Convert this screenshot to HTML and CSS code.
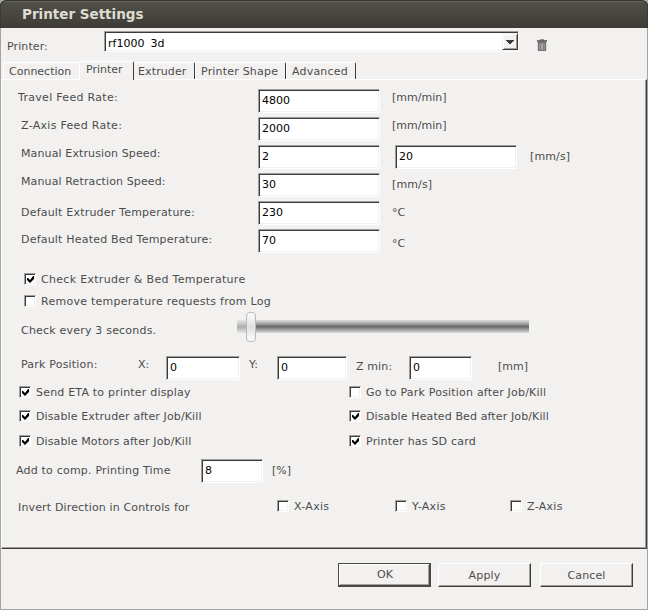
FILE: index.html
```html
<!DOCTYPE html>
<html lang="en">
<head>
<meta charset="utf-8">
<title>Printer Settings</title>
<link rel="stylesheet" href="styles.css">
</head>
<body>
<main class="window">
  <header class="titlebar">Printer Settings</header>
  <div class="client">
    <div class="printer-row">
      <span class="printer-label">Printer:</span>
      <div class="combo"><span>rf1000 3d</span><span class="arrow"><svg width="8" height="4" viewBox="0 0 8 4" shape-rendering="crispEdges"><path d="M0 0h8v1H0zM1 1h6v1H1zM2 2h4v1H2zM3 3h2v1H3z" fill="#3c3b37"/></svg></span></div>
      <svg class="trash" width="10" height="12" viewBox="0 0 10 12"><path d="M3 0h4v1H3z" fill="#969594"/><path d="M0 1h10v2H0z" fill="#747372"/><path d="M3 1h4v1H3z" fill="#5f5e5d"/><path d="M1 3h8v8.5H1z" fill="#929190"/><path d="M1.3 3v8.5h7.4V3M1 3.5h8" fill="none" stroke="#686766" stroke-width=".9"/><path d="M3.5 5v5M6.5 5v5" stroke="#7f7e7d"/><path d="M5 5v5" stroke="#c0bfbe"/></svg>
    </div>
    <nav class="tabs">
      <span class="tab t1">Connection</span><span class="tab t2 active">Printer</span><span class="tab t3 s1">Extruder</span><span class="tab t4 s2">Printer Shape</span><span class="tab t5 s2">Advanced</span>
    </nav>
    <section class="panel">
      <div class="fields">
        <div class="row"><label class="out s3">Travel Feed Rate:</label><input value="4800"><span>[mm/min]</span></div>
        <div class="row"><label class="s3">Z-Axis Feed Rate:</label><input value="2000"><span>[mm/min]</span></div>
        <div class="row pair"><label class="s1">Manual Extrusion Speed:</label><input value="2"><input value="20"><span class="low s1">[mm/s]</span></div>
        <div class="row"><label class="s1">Manual Retraction Speed:</label><input value="30"><span class="low s1">[mm/s]</span></div>
        <div class="row"><label class="low s2">Default Extruder Temperature:</label><input value="230"><span class="low">°C</span></div>
        <div class="row"><label class="mid s2">Default Heated Bed Temperature:</label><input value="70"><span class="lower">°C</span></div>
      </div>
      <div class="temp">
        <label class="check on s3"><i></i><span>Check Extruder &amp; Bed Temperature</span></label>
        <label class="check s25"><i></i><span>Remove temperature requests from Log</span></label>
      </div>
      <div class="poll"><span class="s2">Check every 3 seconds.</span><div class="track"><div class="thumb"></div></div></div>
      <div class="park"><span class="s2">Park Position:</span><span>X:</span><input value="0"><span>Y:</span><input value="0"><span class="drop s1">Z min:</span><input class="narrow" value="0"><span class="drop">[mm]</span></div>
      <div class="options">
        <label class="check on s2"><i></i>Send ETA to printer display</label><label class="check s2"><i></i>Go to Park Position after Job/Kill</label>
        <label class="check on s1"><i></i>Disable Extruder after Job/Kill</label><label class="check on s1"><i></i>Disable Heated Bed after Job/Kill</label>
        <label class="check on s1"><i></i>Disable Motors after Job/Kill</label><label class="check on s2"><i></i>Printer has SD card</label>
      </div>
      <div class="comp"><span class="s2">Add to comp. Printing Time</span><input value="8"><span>[%]</span></div>
      <div class="invert"><span class="s15">Invert Direction in Controls for</span><label class="check s3"><i></i>X-Axis</label><label class="check s3"><i></i>Y-Axis</label><label class="check s3"><i></i>Z-Axis</label></div>
    </section>
    <footer class="buttons"><button class="default">OK</button><button>Apply</button><button class="cancel">Cancel</button></footer>
  </div>
</main>
</body>
</html>
```
FILE: styles.css
```css
* { box-sizing: border-box; }
body {
  margin: 0;
  background: #aaa;
  font: 11px/14px "DejaVu Sans", sans-serif;
  color: #4c4c4c;
}
.s1 { letter-spacing: .12px; }
.s15 { letter-spacing: .15px; }
.s2 { letter-spacing: .2px; }
.s25 { letter-spacing: .26px; }
.s3 { letter-spacing: .3px; }
.window {
  width: 648px;
  height: 610px;
  overflow: hidden;
}
.titlebar {
  height: 28px;
  padding: 5px 0 0 22px;
  border-top: 1px solid #35342f;
  border-radius: 6px 6px 0 0;
  background: linear-gradient(#66655e 0 1px, #504f48 1px, #3d3c37);
  box-shadow: inset 1px 0 #3a3935, inset -1px 0 #3a3935;
  color: #dfdbd2;
  font-size: 13.5px;
  font-weight: bold;
  line-height: 16px;
}
.client {
  height: 582px;
  border: 1px solid #a5a4a2;
  border-top: 0;
  background: #f2f1f0;
}
.printer-row {
  display: flex;
  height: 33px;
  padding-left: 6px;
}
.printer-label {
  width: 97px;
  padding-top: 12px;
  letter-spacing: .1px;
}
input, .combo {
  font: 11px/14px "DejaVu Sans", sans-serif;
  color: #000;
  background: #fff;
  border: 1px solid;
  border-color: #a09f9d #fff #fff #a09f9d;
  box-shadow: inset 1px 1px #3c3b37, inset -1px -1px #f2f1f0;
}
input {
  width: 122px;
  height: 24px;
  padding: 1px 3px 2px;
  border-radius: 0;
  outline: 0;
}
.combo {
  display: flex;
  justify-content: space-between;
  width: 415px;
  height: 21px;
  margin-top: 3px;
  padding: 4px 0 1px 3px;
  word-spacing: 2.5px;
}
.combo > span:first-child { padding-top: 1px; }
.arrow {
  display: flex;
  align-items: center;
  justify-content: center;
  width: 16px;
  height: 17px;
  margin-top: -3px;
  background: #f2f1f0;
  border: 1px solid;
  border-color: #f2f1f0 #3c3b37 #3c3b37 #f2f1f0;
  box-shadow: inset 1px 1px #fff, inset -1px -1px #a09f9d;
}
.trash { margin: 11px 0 0 18px; }
.tabs {
  display: flex;
  align-items: flex-end;
  height: 18px;
  padding-left: 2px;
}
.tab {
  height: 17px;
  padding: 2px 0 0 5px;
  border: 1px solid #fff;
  border-bottom: 0;
  border-right-color: #3c3b37;
  border-radius: 2px 2px 0 0;
  white-space: nowrap;
}
.tab.active {
  z-index: 1;
  height: 19px;
  margin-bottom: -1px;
  padding-top: 1px;
  border-right-width: 1px;
  background: #f2f1f0;
}
.t1 { width: 76px; border-right: 0; }
.t2 { width: 55px; padding-left: 6px; }
.t3 { width: 61px; border-left: 0; padding-left: 4px; }
.t4 { width: 91px; }
.t5 { width: 70px; }
.panel {
  height: 470px;
  border: 1px solid;
  border-color: #fff #3c3b37 #3c3b37 #fff;
  box-shadow: inset -1px -1px #a09f9d;
  padding: 9px 0 0 16px;
}
.row {
  display: grid;
  grid-template-columns: 240px 134px 1fr;
  height: 28px;
  align-items: start;
}
.pair { grid-template-columns: 240px 137px 135px 1fr; }
.row label { padding: 2px 0 0 3px; }
.row label.out { padding-left: 0; }
.row label.mid { padding-top: 4px; }
.row label.low, .row .low { padding-top: 5px; }
.row span { padding-top: 2px; }
.row .lower { padding-top: 8px; }
.check { display: flex; }
.check i {
  width: 12px;
  height: 12px;
  margin: 0 5px 0 0;
  background: #fff;
  border: 1px solid;
  border-color: #a09f9d #fff #fff #a09f9d;
  box-shadow: inset 1px 1px #3c3b37, inset -1px -1px #f2f1f0;
}
.on i::after {
  content: "";
  display: block;
  width: 7px;
  height: 7px;
  margin: 2px 0 0 2px;
  background: #000;
  clip-path: polygon(0 29%, 15% 29%, 43% 57%, 86% 0, 100% 0, 100% 43%, 43% 100%, 0 57%);
}
.temp { padding: 16px 0 0 6px; }
.temp .check { height: 22px; }
.poll {
  display: grid;
  grid-template-columns: 216px 292px;
  height: 39px;
  padding-left: 3px;
}
.poll span { padding-top: 7px; }
.track {
  height: 13px;
  margin-top: 3px;
  padding-left: 9px;
  background: linear-gradient(90deg, rgba(242, 241, 240, .5) 0 12px, transparent 12px), linear-gradient(#dcdcdb, #ababab 25%, #696969 50%, #8f8f8f 67%, #dcdcdb);
}
.thumb {
  width: 10px;
  height: 30px;
  margin-top: -8px;
  border: 1px solid #b9babb;
  border-radius: 4px;
  background: linear-gradient(#fff, #dedede 50%, #fff);
}
.park {
  display: grid;
  grid-template-columns: 117px 28px 83px 28px 79px 53px 89px 1fr;
  height: 30px;
  padding-left: 3px;
  align-items: start;
}
.park input { width: 74px; }
.park input:nth-of-type(2) { width: 70px; }
.park .narrow:nth-of-type(3) { width: 63px; }
.park span { padding-top: 2px; }
.park .drop { padding-top: 4px; }
.options {
  display: grid;
  grid-template-columns: 330px 1fr;
  grid-template-rows: 24px 25px 24px;
  padding-left: 1px;
}
.comp {
  display: grid;
  grid-template-columns: 185px 71px 1fr;
  height: 41px;
  margin-left: -2px;
}
.comp input { width: 62px; }
.comp span { padding-top: 5px; }
.invert {
  display: grid;
  grid-template-columns: 259px 118px 115px 1fr;
}
.invert > span { padding-top: 1px; }
.buttons {
  display: flex;
  gap: 7px;
  padding: 14px 0 0 337px;
}
button {
  width: 93px;
  height: 24px;
  padding: 1px 0 0;
  font: inherit;
  letter-spacing: .15px;
  color: inherit;
  background: #f2f1f0;
  border: 1px solid;
  border-color: #fff #3c3b37 #3c3b37 #fff;
  box-shadow: inset -1px -1px #a09f9d;
}
.cancel { margin-left: 2px; }
.default {
  padding-left: 2px;
  border: 1px solid #4a4946;
  border-width: 1px 2px 2px 1px;
  box-shadow: inset 1px 1px #fff, inset -1px -1px #a09f9d;
}
```
